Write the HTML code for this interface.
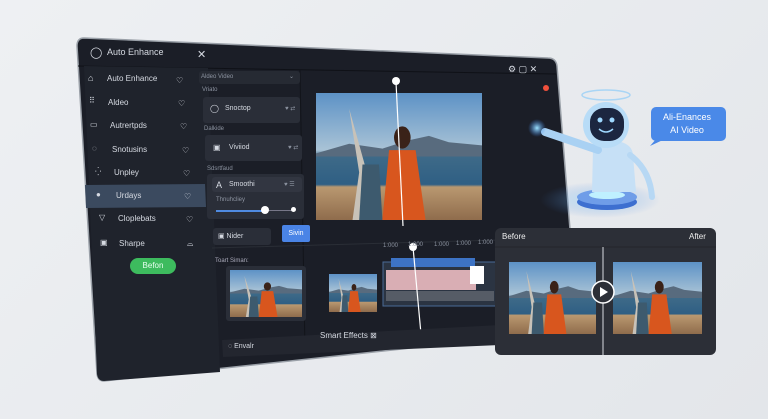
<!DOCTYPE html>
<html><head><meta charset="utf-8"><style>
*{margin:0;padding:0;box-sizing:border-box}
body{width:768px;height:419px;overflow:hidden;background:linear-gradient(135deg,#eef0f3,#e3e6ea);font-family:"Liberation Sans",sans-serif;position:relative}
.a{position:absolute}
.t{position:absolute;color:#d6dae2;font-size:8px;white-space:nowrap}
.s{font-size:6px;color:#8c93a0}
.card{position:absolute;background:#2a2e38;border-radius:3px}
.h{position:absolute;width:7px;height:7px;border:1px solid #aab;border-radius:50% 50% 2px 50%;transform:rotate(45deg)}
</style></head><body>
<svg class="a" style="left:0;top:0" width="768" height="419">
<defs>
<linearGradient id="sky" x1="0" y1="0" x2="0" y2="1"><stop offset="0" stop-color="#5d92c6"/><stop offset=".45" stop-color="#a9c3d6"/><stop offset=".5" stop-color="#3e6a88"/><stop offset=".72" stop-color="#2f5f84"/><stop offset=".74" stop-color="#b99870"/><stop offset="1" stop-color="#8f6c4c"/></linearGradient>
<symbol id="ph" viewBox="0 0 100 80" preserveAspectRatio="none">
<rect width="100" height="80" fill="url(#sky)"/>
<path d="M0 38 L20 32 L40 35 L55 30 L68 27 L80 31 L100 33 L100 40 L0 40Z" fill="#586b7e"/>
<path d="M20 10 L32 55 L38 80 L22 80 L26 50Z" fill="#c8c2b8"/>
<path d="M28 45 L38 45 L40 80 L26 80Z" fill="#3d5a6e"/>
<ellipse cx="52" cy="28" rx="5" ry="7" fill="#3a2218"/>
<path d="M44 36 L60 36 L66 80 L40 80Z" fill="#d8561e"/>
</symbol>
<radialGradient id="glow"><stop offset="0" stop-color="#9fe4ff"/><stop offset="1" stop-color="#3b7ee0" stop-opacity="0"/></radialGradient>
</defs>
<path d="M84 38 L548 58 Q556 58 557 66 L578 330 L104 381 Q98 381 97 374 L77 46 Q77 38 84 38Z" fill="#1b1e27" stroke="#9aa0a8" stroke-width="1.5"/>
<path d="M78 66 L556 74" stroke="#0f1117" stroke-width="1"/>
<path d="M84 66 L208 68 L220 372 L104 381 Q98 381 97 374Z" fill="#1f232c"/>
<path d="M85 185 L205 184 L206 207 L86 208Z" fill="#3b4a5f"/>
<path d="M300 70 L305 350" stroke="#12141a"/>
<path d="M212 248 L500 240" stroke="#2a2e36"/>
<use href="#ph" x="316" y="93" width="166" height="127"/>
<line x1="396" y1="82" x2="403" y2="226" stroke="#fff" stroke-width="1.2"/>
<circle cx="396" cy="81" r="4" fill="#fff"/>
<rect x="226" y="266" width="80" height="55" rx="3" fill="#2a2e38"/>
<use href="#ph" x="230" y="270" width="72" height="47"/>
<use href="#ph" x="329" y="274" width="48" height="38"/>
<rect x="383" y="262" width="115" height="44" fill="#2b3442" stroke="#4a6a96"/>
<rect x="391" y="258" width="84" height="9" fill="#3d73c5"/>
<rect x="386" y="270" width="90" height="20" fill="#d9aeb4"/>
<rect x="386" y="291" width="108" height="10" fill="#565c66"/>
<rect x="470" y="266" width="14" height="18" fill="#fff"/>
<line x1="413" y1="247" x2="421" y2="334" stroke="#fff" stroke-width="1.2"/>
<circle cx="413" cy="247" r="4" fill="#fff"/>
<path d="M222 340 L500 325 L500 345 L223 357Z" fill="#23262f"/>
<!-- robot -->
<ellipse cx="600" cy="200" rx="60" ry="18" fill="url(#glow)" opacity=".5"/>
<ellipse cx="607" cy="202" rx="30" ry="8" fill="#3d6fd0"/>
<ellipse cx="607" cy="197" rx="30" ry="8" fill="#6f9de8"/>
<ellipse cx="607" cy="195" rx="18" ry="4" fill="#bff0ff"/>
<path d="M593 150 Q590 140 605 140 Q632 140 633 155 L636 192 L592 192Z" fill="#c6e0f6"/>
<path d="M598 150 L545 132" stroke="#a9d1f3" stroke-width="8" stroke-linecap="round"/>
<path d="M630 155 Q650 170 652 197" stroke="#b7d8f4" stroke-width="6" fill="none" stroke-linecap="round"/>
<circle cx="537" cy="128" r="9" fill="url(#glow)"/>
<ellipse cx="606" cy="95" rx="24" ry="5" fill="none" stroke="#a9d5f5" stroke-width="1.5"/>
<circle cx="606" cy="125" r="23" fill="#b8dcf7"/>
<rect x="590" y="108" width="34" height="33" rx="14" fill="#1c2640"/>
<circle cx="600" cy="120" r="2.5" fill="#9fd8ff"/><circle cx="612" cy="120" r="2.5" fill="#9fd8ff"/>
<path d="M599 129 Q606 135 613 129" stroke="#9fd8ff" stroke-width="1.5" fill="none"/>
<path d="M657 138 L650 146 L665 139Z" fill="#4a87e6"/>
<rect x="651" y="107" width="75" height="34" rx="5" fill="#4a89e8"/>
<!-- before/after -->
<rect x="495" y="228" width="221" height="127" rx="6" fill="#2c2f37"/>
<path d="M495 247 L716 247" stroke="#23252b"/>
<use href="#ph" x="509" y="262" width="87" height="72"/>
<use href="#ph" x="613" y="262" width="89" height="72"/>
<line x1="603" y1="247" x2="603" y2="355" stroke="#d8dbe0"/>
<circle cx="603" cy="292" r="11" fill="#2c2f37" stroke="#fff" stroke-width="1.5"/>
<path d="M600 287 L608 292 L600 297Z" fill="#fff"/>
<circle cx="546" cy="88" r="3" fill="#f0503c"/>
</svg>
<div class="t" style="left:90px;top:46px;font-size:11px">◯</div>
<div class="t" style="left:107px;top:47px;font-size:9px">Auto Enhance</div>
<div class="t" style="left:197px;top:48px;font-size:11px">✕</div>
<div class="t" style="left:88px;top:73px;font-size:9px">⌂</div><div class="t" style="left:107px;top:74px">Auto Enhance</div>
<div class="t" style="left:89px;top:96px">⠿</div><div class="t" style="left:108px;top:98px">Aldeo</div>
<div class="t" style="left:90px;top:120px">▭</div><div class="t" style="left:110px;top:121px">Autrertpds</div>
<div class="t" style="left:92px;top:144px">◌</div><div class="t" style="left:112px;top:145px">Snotusins</div>
<div class="t" style="left:95px;top:167px">⁛</div><div class="t" style="left:114px;top:168px">Unpley</div>
<div class="t" style="left:96px;top:190px">●</div><div class="t" style="left:116px;top:191px">Urdays</div>
<div class="t" style="left:99px;top:213px">▽</div><div class="t" style="left:118px;top:214px">Cloplebats</div>
<div class="t" style="left:100px;top:238px">▣</div><div class="t" style="left:119px;top:239px">Sharpe</div>
<div class="t" style="left:176px;top:76px">♡</div><div class="t" style="left:178px;top:99px">♡</div><div class="t" style="left:180px;top:122px">♡</div><div class="t" style="left:182px;top:146px">♡</div><div class="t" style="left:183px;top:169px">♡</div><div class="t" style="left:184px;top:192px">♡</div><div class="t" style="left:186px;top:215px">♡</div><div class="t" style="left:187px;top:239px">⌓</div>
<div class="a" style="left:130px;top:258px;width:46px;height:16px;border-radius:8px;background:#3dbb5e;color:#e8fff0;font-size:8px;text-align:center;line-height:16px">Befon</div>
<div class="card" style="left:199px;top:71px;width:101px;height:13px;background:#262a33"></div>
<div class="t s" style="left:201px;top:74px">Aldeo Video</div><div class="t s" style="left:289px;top:73px">⌄</div>
<div class="t s" style="left:202px;top:87px">Vriato</div>
<div class="card" style="left:203px;top:97px;width:97px;height:26px"></div>
<div class="t" style="left:210px;top:104px">◯</div><div class="t" style="left:225px;top:105px;font-size:7px">Snoctop</div><div class="t s" style="left:285px;top:105px">♥ ⇄</div>
<div class="t s" style="left:204px;top:126px">Dalkide</div>
<div class="card" style="left:205px;top:135px;width:97px;height:26px"></div>
<div class="t" style="left:213px;top:143px">▣</div><div class="t" style="left:229px;top:144px;font-size:7px">Viviiod</div><div class="t s" style="left:288px;top:144px">♥ ⇄</div>
<div class="t s" style="left:207px;top:166px">Sdsrtfaud</div>
<div class="card" style="left:207px;top:174px;width:97px;height:45px"></div>
<div class="card" style="left:212px;top:177px;width:90px;height:15px;background:#323641"></div>
<div class="t" style="left:216px;top:180px;font-size:9px">A</div><div class="t" style="left:229px;top:181px;font-size:7px">Smoothi</div><div class="t s" style="left:284px;top:181px">♥ ☰</div>
<div class="t s" style="left:216px;top:197px">Thnuhcliey</div>
<div class="a" style="left:216px;top:210px;width:49px;height:2px;background:#4f8ae0"></div><div class="a" style="left:265px;top:210px;width:30px;height:1px;background:#778"></div>
<div class="a" style="left:261px;top:206px;width:8px;height:8px;border-radius:50%;background:#fff"></div><div class="a" style="left:291px;top:207px;width:5px;height:5px;border-radius:50%;background:#fff"></div>
<div class="card" style="left:213px;top:228px;width:58px;height:17px"></div>
<div class="t" style="left:218px;top:232px;font-size:7px">▣ Nider</div>
<div class="a" style="left:282px;top:225px;width:28px;height:17px;background:#4a84e6;border-radius:2px;color:#fff;font-size:7px;text-align:center;line-height:17px">Sivin</div>
<div class="t s" style="left:215px;top:258px;color:#aab">Toart Siman:</div>
<div class="t s" style="left:383px;top:243px">1:000</div><div class="t s" style="left:408px;top:242px">1:000</div><div class="t s" style="left:434px;top:242px">1:000</div><div class="t s" style="left:456px;top:241px">1:000</div><div class="t s" style="left:478px;top:240px">1:000</div>
<div class="t" style="left:228px;top:343px;font-size:7px">◌ Envalr</div>
<div class="t" style="left:320px;top:331px;font-size:8px">Smart Effects ⊠</div>
<div class="t" style="left:508px;top:64px;font-size:9px">⚙ ▢ ✕</div>
<div class="t" style="left:663px;top:111px;font-size:9px;color:#fff;text-align:center;line-height:13px">Ali-Enances<br>AI Video</div>
<div class="t" style="left:502px;top:232px;font-size:8px;color:#eee">Before</div>
<div class="t" style="left:689px;top:232px;font-size:8px;color:#eee">After</div>
</body></html>
